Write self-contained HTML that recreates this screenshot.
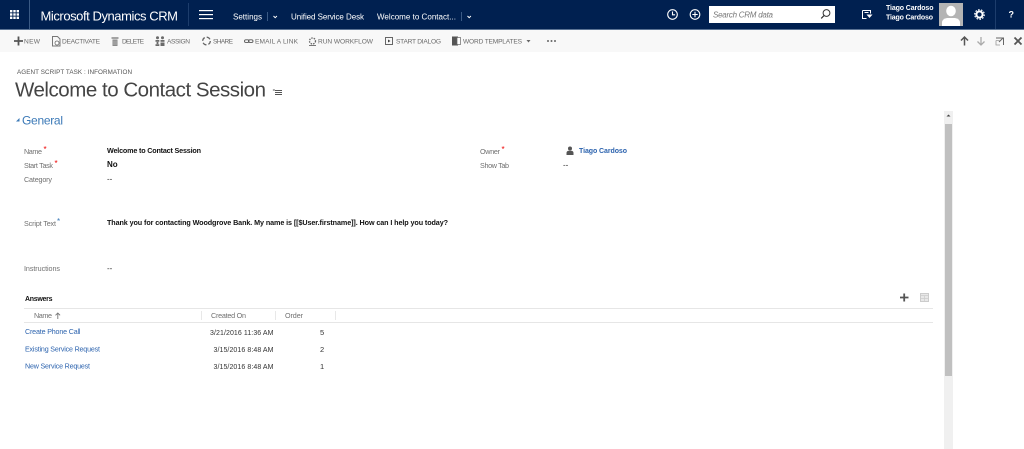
<!DOCTYPE html>
<html><head><meta charset="utf-8"><title>Welcome to Contact Session</title>
<style>
html,body{margin:0;padding:0;background:#fff;width:1024px;height:449px;overflow:hidden}
svg{display:block}
text{font-family:"Liberation Sans",sans-serif;white-space:pre}
.n{fill:#fff;font-size:8px}
.t{fill:#6a6a6a;font-size:6.6px}
.l{fill:#707070;font-size:7.2px}
.v{fill:#111;font-size:7.2px;font-weight:bold}
.d{fill:#333;font-size:7px}
.a{fill:#2c63ae;font-size:7.1px}
</style></head><body>
<svg width="1024" height="449" viewBox="0 0 1024 449" xmlns="http://www.w3.org/2000/svg">
<rect width="1024" height="449" fill="#fff"/>
<rect width="1024" height="29" fill="#002050"/>
<rect y="29" width="1024" height="1" fill="#5a7394"/>
<rect y="30" width="1024" height="22" fill="#f8f8f8"/>
<!-- nav -->
<g fill="#fff"><rect x="10" y="10" width="2.4" height="2.4"/><rect x="13.3" y="10" width="2.4" height="2.4"/><rect x="16.6" y="10" width="2.4" height="2.4"/><rect x="10" y="13.3" width="2.4" height="2.4"/><rect x="13.3" y="13.3" width="2.4" height="2.4"/><rect x="16.6" y="13.3" width="2.4" height="2.4"/><rect x="10" y="16.6" width="2.4" height="2.4"/><rect x="13.3" y="16.6" width="2.4" height="2.4"/><rect x="16.6" y="16.6" width="2.4" height="2.4"/></g>
<rect x="29" width="1" height="29" fill="#3a5a85"/>
<text x="40.5" y="20.5" fill="#fff" font-size="13" textLength="137.5">Microsoft Dynamics CRM</text>
<rect x="188" y="3" width="1" height="23" fill="#1d3d6c"/>
<g fill="#fff"><rect x="199" y="10" width="14" height="1.2"/><rect x="199" y="14" width="14" height="1.2"/><rect x="199" y="18" width="14" height="1.2"/></g>
<text class="n" x="233" y="19.5" textLength="29">Settings</text>
<rect x="267" y="12" width="1" height="9" fill="#3a5a85"/>
<path d="M273.5 16l1.7 1.7 1.7-1.7" fill="none" stroke="#fff" stroke-width="1"/>
<text class="n" x="291" y="19.5" textLength="73">Unified Service Desk</text>
<text class="n" x="377" y="19.5" textLength="79">Welcome to Contact...</text>
<rect x="461" y="12" width="1" height="9" fill="#3a5a85"/>
<path d="M467.5 16l1.7 1.7 1.7-1.7" fill="none" stroke="#fff" stroke-width="1"/>
<g fill="none" stroke="#fff" stroke-width="1.1">
<circle cx="672.5" cy="14.5" r="4.8"/><path d="M672.5 11.5v3.3h2.6"/>
<circle cx="695" cy="14.5" r="4.8"/><path d="M692.3 14.5h5.4M695 11.8v5.4"/>
</g>
<rect x="709" y="6" width="126" height="17" fill="#fff"/>
<text x="713" y="17.5" fill="#777" font-size="8" font-style="italic" textLength="60">Search CRM data</text>
<circle cx="826.5" cy="13" r="3.4" fill="none" stroke="#333" stroke-width="1"/>
<path d="M824 15.6l-2.8 2.8" stroke="#333" stroke-width="1.2"/>
<path d="M862.5 10.500h8v3M862.5 10.500v8h4M864.5 12.500h4" fill="none" stroke="#fff" stroke-width="1"/>
<path d="M866.5 14.5h6l-3 3.500z" fill="#fff"/>
<text x="886" y="10" fill="#fff" font-size="7" font-weight="bold" textLength="47.5">Tiago Cardoso</text>
<text x="886" y="19.5" fill="#fff" font-size="7" font-weight="bold" textLength="47">Tiago Cardoso</text>
<rect x="939" y="3" width="24" height="23" fill="#b4b4b4"/>
<ellipse cx="951" cy="11" rx="4.8" ry="5.3" fill="#fff"/>
<path d="M942 26v-3.5q0-3.5 5-4.500h8q5 1 5 4.500V26z" fill="#fff"/>
<circle cx="979.5" cy="14.5" r="3.1" fill="none" stroke="#fff" stroke-width="2"/>
<circle cx="979.5" cy="14.5" r="4.8" fill="none" stroke="#fff" stroke-width="1.2" stroke-dasharray="1.6 1.4"/>
<rect x="995" width="1" height="29" fill="#1d3d6c"/>
<text x="1008.5" y="17.5" fill="#fff" font-size="9" font-weight="bold">?</text>
<!-- toolbar -->
<path d="M14 41h9M18.500 36.500v9" stroke="#555" stroke-width="1.800"/>
<text class="t" x="24" y="43.500" textLength="16">NEW</text>
<path d="M52.500 36.500h5l2.500 2.500v7h-7.500z" fill="none" stroke="#777" stroke-width="1"/><circle cx="57" cy="43" r="2" fill="#fff" stroke="#666" stroke-width=".8"/>
<text class="t" x="62" y="43.500" textLength="38">DEACTIVATE</text>
<path d="M111.500 38h7" stroke="#777" stroke-width="1.300"/><path d="M112.500 39.500h5v6.500h-5z" fill="#8a8a8a"/><path d="M114 40.500v4.500M116 40.500v4.500" stroke="#ddd" stroke-width=".5"/>
<text class="t" x="122" y="43.500" textLength="22">DELETE</text>
<g fill="#6a6a6a"><circle cx="157.500" cy="37.800" r="1.500"/><circle cx="162.500" cy="37.800" r="1.500"/><rect x="155.500" y="40" width="3.800" height="1.800"/><rect x="160.500" y="40" width="4" height="1.800"/><circle cx="157.500" cy="43" r="1.100"/><rect x="155.500" y="44.200" width="3.800" height="1.800"/><rect x="160.500" y="42.500" width="4" height="3.500"/></g>
<text class="t" x="167" y="43.500" textLength="23">ASSIGN</text>
<circle cx="206.500" cy="41" r="3.800" fill="none" stroke="#666" stroke-width="1.300" stroke-dasharray="4 2"/>
<text class="t" x="213" y="43.500" textLength="20">SHARE</text>
<rect x="244.500" y="39.800" width="4.500" height="2.600" rx="1.300" fill="none" stroke="#555" stroke-width=".9"/><rect x="248.500" y="39.800" width="4.500" height="2.600" rx="1.300" fill="none" stroke="#555" stroke-width=".9"/>
<text class="t" x="255" y="43.500" textLength="43">EMAIL A LINK</text>
<circle cx="312.500" cy="41" r="3" fill="none" stroke="#666" stroke-width="1.300" stroke-dasharray="1.500 1"/><path d="M309 45.500h7" stroke="#777"/>
<text class="t" x="318" y="43.500" textLength="55">RUN WORKFLOW</text>
<rect x="385.500" y="37.500" width="7" height="7" fill="none" stroke="#666"/><path d="M388 39.500l2.500 1.500-2.500 1.500z" fill="#444"/>
<text class="t" x="396" y="43.500" textLength="45">START DIALOG</text>
<rect x="452" y="36.500" width="6" height="9" fill="#555"/><rect x="457" y="37.500" width="3.500" height="7" fill="#fff" stroke="#666" stroke-width=".7"/>
<text class="t" x="463" y="43.500" textLength="59">WORD TEMPLATES</text>
<path d="M526.500 40h4l-2 2.500z" fill="#666"/>
<g fill="#666"><circle cx="548" cy="41" r="1"/><circle cx="551.500" cy="41" r="1"/><circle cx="555" cy="41" r="1"/></g>
<path d="M964.500 45.500v-8M961 40.500l3.500-3.500 3.500 3.500" fill="none" stroke="#555" stroke-width="1.500"/>
<path d="M981 37v8M977.500 41.500l3.500 3.500 3.500-3.500" fill="none" stroke="#aaa" stroke-width="1.300"/>
<path d="M996 38h7.500v7M999 42l4-4" fill="none" stroke="#666" stroke-width="1"/><path d="M996 40.500h3.500M996 40.500v4.500h4" fill="none" stroke="#999" stroke-width=".8"/>
<path d="M1014.500 37.500l7 7M1021.500 37.500l-7 7" stroke="#555" stroke-width="1.800"/>
<!-- header -->
<text x="17" y="74" fill="#555" font-size="6.3" textLength="115">AGENT SCRIPT TASK : INFORMATION</text>
<text x="15" y="96.500" fill="#444" font-size="20.500" textLength="251">Welcome to Contact Session</text>
<path d="M272.500 90l2 -1v2z" fill="#555"/><path d="M275 90.500h7M275 92.500h7M275 94.500h7" stroke="#555" stroke-width=".9"/>
<path d="M16 121.500l3.500-3.500v3.500z" fill="#3b79b7"/>
<text x="22" y="124.500" fill="#3b79b7" font-size="12" textLength="41">General</text>
<!-- form -->
<text class="l" x="24" y="154" textLength="18">Name</text><text x="43.500" y="152" fill="#e00" font-size="8">*</text>
<text class="v" x="107" y="153" textLength="94">Welcome to Contact Session</text>
<text class="l" x="24" y="168" textLength="29">Start Task</text><text x="54.500" y="166" fill="#e00" font-size="8">*</text>
<text x="107" y="167" fill="#111" font-size="8" font-weight="bold">No</text>
<text class="l" x="24" y="182" textLength="28">Category</text>
<text x="107" y="181.500" fill="#333" font-size="8">--</text>
<text class="l" x="24" y="226" textLength="32">Script Text</text><text x="57" y="224" fill="#3b79b7" font-size="8">*</text>
<text class="v" x="107" y="225" textLength="341">Thank you for contacting Woodgrove Bank. My name is [[$User.firstname]]. How can I help you today?</text>
<text class="l" x="24" y="271" textLength="36">Instructions</text>
<text x="107" y="271" fill="#333" font-size="8">--</text>
<text class="l" x="480" y="154" textLength="20">Owner</text><text x="501.500" y="152" fill="#e00" font-size="8">*</text>
<circle cx="570" cy="148.500" r="2" fill="#555"/><path d="M566.500 155v-2q0-2 2-2.300h3q2 .3 2 2.300v2z" fill="#555"/>
<text x="579" y="153" fill="#2c63ae" font-size="7" font-weight="bold" textLength="48">Tiago Cardoso</text>
<text class="l" x="480" y="168" textLength="29">Show Tab</text>
<text x="563" y="167.500" fill="#333" font-size="8">--</text>
<!-- grid -->
<text x="25" y="301" fill="#111" font-size="7" font-weight="bold" textLength="27.500">Answers</text>
<path d="M900 297.500h8.500M904.200 293.500v8" stroke="#555" stroke-width="1.800"/>
<rect x="920.500" y="293.500" width="8" height="8" fill="#e8e8e8" stroke="#ccc"/><path d="M921 295.500h7M921 298.500h7M924.500 296v5" stroke="#ccc" stroke-width=".7"/>
<rect x="24" y="308" width="909" height="1" fill="#e6e6e6"/>
<rect x="24" y="322" width="909" height="1" fill="#e6e6e6"/>
<rect x="201" y="311" width="1" height="9" fill="#e8e8e8"/><rect x="275" y="311" width="1" height="9" fill="#e8e8e8"/><rect x="335" y="311" width="1" height="9" fill="#e8e8e8"/>
<text class="l" x="34" y="318" textLength="18">Name</text>
<path d="M57.800 319v-6M55.500 315.300l2.300-2.300 2.300 2.300" fill="none" stroke="#777" stroke-width=".9"/>
<text class="l" x="211" y="318" textLength="35">Created On</text>
<text class="l" x="285" y="318" textLength="18">Order</text>
<text class="a" x="25" y="334" textLength="55.500">Create Phone Call</text>
<text class="d" x="210" y="335" textLength="63.500">3/21/2016 11:36 AM</text>
<text x="320" y="335" fill="#333" font-size="7.500">5</text>
<text class="a" x="25" y="351.500" textLength="75">Existing Service Request</text>
<text class="d" x="213.500" y="352" textLength="60">3/15/2016 8:48 AM</text>
<text x="320" y="352" fill="#333" font-size="7.500">2</text>
<text class="a" x="25" y="368.500" textLength="65">New Service Request</text>
<text class="d" x="213.500" y="369" textLength="60">3/15/2016 8:48 AM</text>
<text x="320" y="369" fill="#333" font-size="7.500">1</text>
<!-- scrollbar -->
<rect x="944" y="111" width="9" height="338" fill="#f0f0f0"/>
<rect x="945" y="124" width="7" height="252" fill="#c0c0c0"/>
<path d="M946.500 116.500h4l-2-2z" fill="#444"/>
</svg>
</body></html>
